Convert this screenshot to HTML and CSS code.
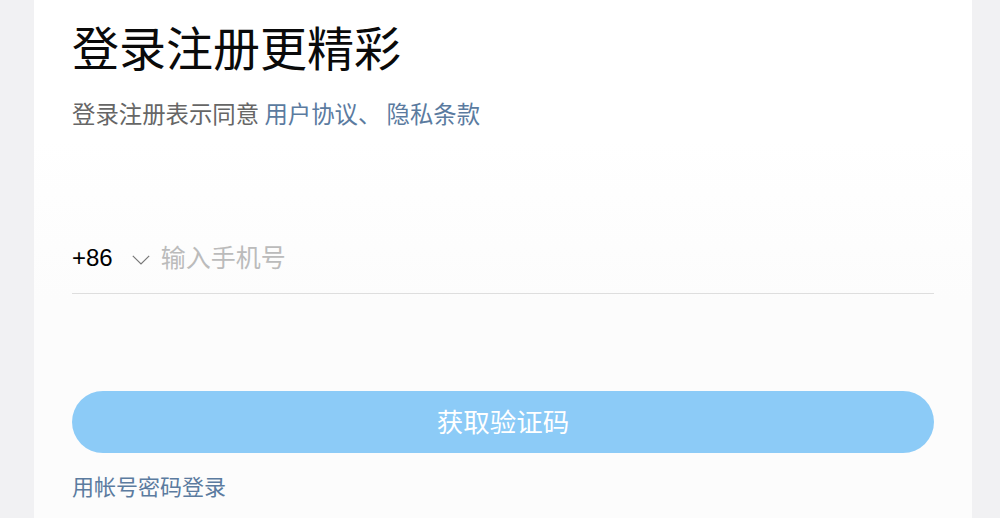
FILE: index.html
```html
<!DOCTYPE html>
<html lang="zh-CN">
<head>
<meta charset="utf-8">
<title>登录注册</title>
<link rel="stylesheet" href="styles.css">
</head>
<body>
<main class="card">
  <h1 class="title">登录注册更精彩</h1>
  <p class="agree">登录注册表示同意 <a class="link" href="#">用户协议</a><span class="link">、</span> <a class="link" href="#">隐私条款</a></p>
  <div class="phone-row">
    <span class="code">+86</span>
    <svg class="chev" width="18" height="10" viewBox="0 0 18 10"><polyline points="0.8,0.8 9,9 17.2,0.8" fill="none" stroke="#777" stroke-width="1.2"/></svg>
    <input class="phone" type="text" placeholder="输入手机号">
  </div>
  <button class="submit" type="button">获取验证码</button>
  <a class="alt" href="#">用帐号密码登录</a>
</main>
</body>
</html>
```

FILE: styles.css
```css
html, body {
  margin: 0;
  padding: 0;
  background: #f1f1f3;
  font-family: "Noto Sans CJK SC", "Noto Sans", sans-serif;
}
.card {
  margin-left: 34px;
  width: 938px;
  min-height: 518px;
  box-sizing: border-box;
  padding: 15px 38px 0;
  background: linear-gradient(#ffffff 0, #ffffff 140px, #fcfcfc 300px, #fcfcfc 100%);
}
.title {
  margin: 0;
  font-size: 47px;
  line-height: 62px;
  font-weight: 400;
  color: #0a0a0a;
}
.agree {
  margin: 20px 0 0;
  font-size: 23.4px;
  line-height: 32px;
  color: #666;
}
.link {
  color: #5b7b9f;
  text-decoration: none;
}
.phone-row {
  display: flex;
  align-items: center;
  margin-top: 107px;
  height: 44px;
  padding-bottom: 13px;
  border-bottom: 1px solid #dedede;
}
.code {
  font-family: "Liberation Sans", Arial, sans-serif;
  font-size: 24px;
  color: #000;
}
.chev {
  margin-left: 19px;
  margin-right: 11px;
  margin-top: 3px;
  display: block;
}
.phone {
  flex: 1;
  border: none;
  outline: none;
  background: transparent;
  padding: 0;
  margin-bottom: 5px;
  font-family: "Noto Sans CJK SC", sans-serif;
  font-size: 25px;
  color: #333;
}
.phone::placeholder {
  color: #bbb;
}
.submit {
  display: block;
  width: 100%;
  height: 62px;
  margin-top: 97px;
  border: none;
  border-radius: 31px;
  background: #8ccbf7;
  color: #fff;
  font-family: "Noto Sans CJK SC", sans-serif;
  font-size: 26.5px;
  padding: 0 0 4px;
}
.alt {
  display: block;
  margin-top: 17px;
  font-size: 22px;
  line-height: 30px;
  color: #5b7b9f;
  text-decoration: none;
}
```
